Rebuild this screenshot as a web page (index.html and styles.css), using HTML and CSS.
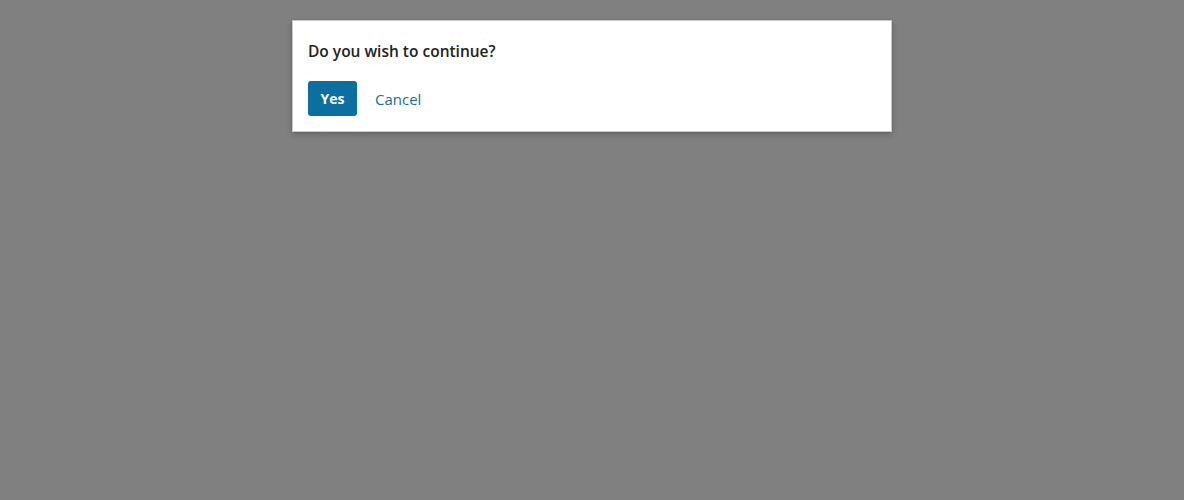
FILE: index.html
```html
<!DOCTYPE html>
<html>
<head>
<meta charset="utf-8">
<link rel="stylesheet" href="styles.css">
</head>
<body>
<div class="overlay">
  <div class="dialog">
    <div class="title">Do you wish to continue?</div>
    <div class="actions">
      <button class="btn-primary">Yes</button>
      <button class="btn-link">Cancel</button>
    </div>
  </div>
</div>
</body>
</html>
```
FILE: styles.css
```css
html, body {
  margin: 0;
  padding: 0;
  height: 100%;
  background: #808080;
  font-family: "Open Sans", "Noto Sans", sans-serif;
}
.overlay {
  display: flex;
  justify-content: center;
  align-items: flex-start;
  padding-top: 20px;
}
.dialog {
  width: 568px;
  background: #fff;
  border: 1px solid #c8c8c8;
  box-shadow: 0 2px 6px rgba(0,0,0,0.25);
  padding: 19px 15px 15px 15px;
}
.title {
  font-size: 15.5px;
  font-weight: 600;
  color: #222;
  line-height: 22px;
}
.actions {
  display: flex;
  align-items: center;
  gap: 6px;
  margin-top: 19px;
}
.btn-primary {
  font-family: inherit;
  font-size: 14px;
  font-weight: 700;
  color: #fff;
  background: #0b6fa0;
  border: none;
  border-radius: 3px;
  width: 49px;
  height: 35px;
  padding: 0;
}
.btn-link {
  font-family: inherit;
  font-size: 15px;
  color: #1a6f98;
  background: none;
  border: none;
  padding: 0 12px;
  height: 35px;
}
```
